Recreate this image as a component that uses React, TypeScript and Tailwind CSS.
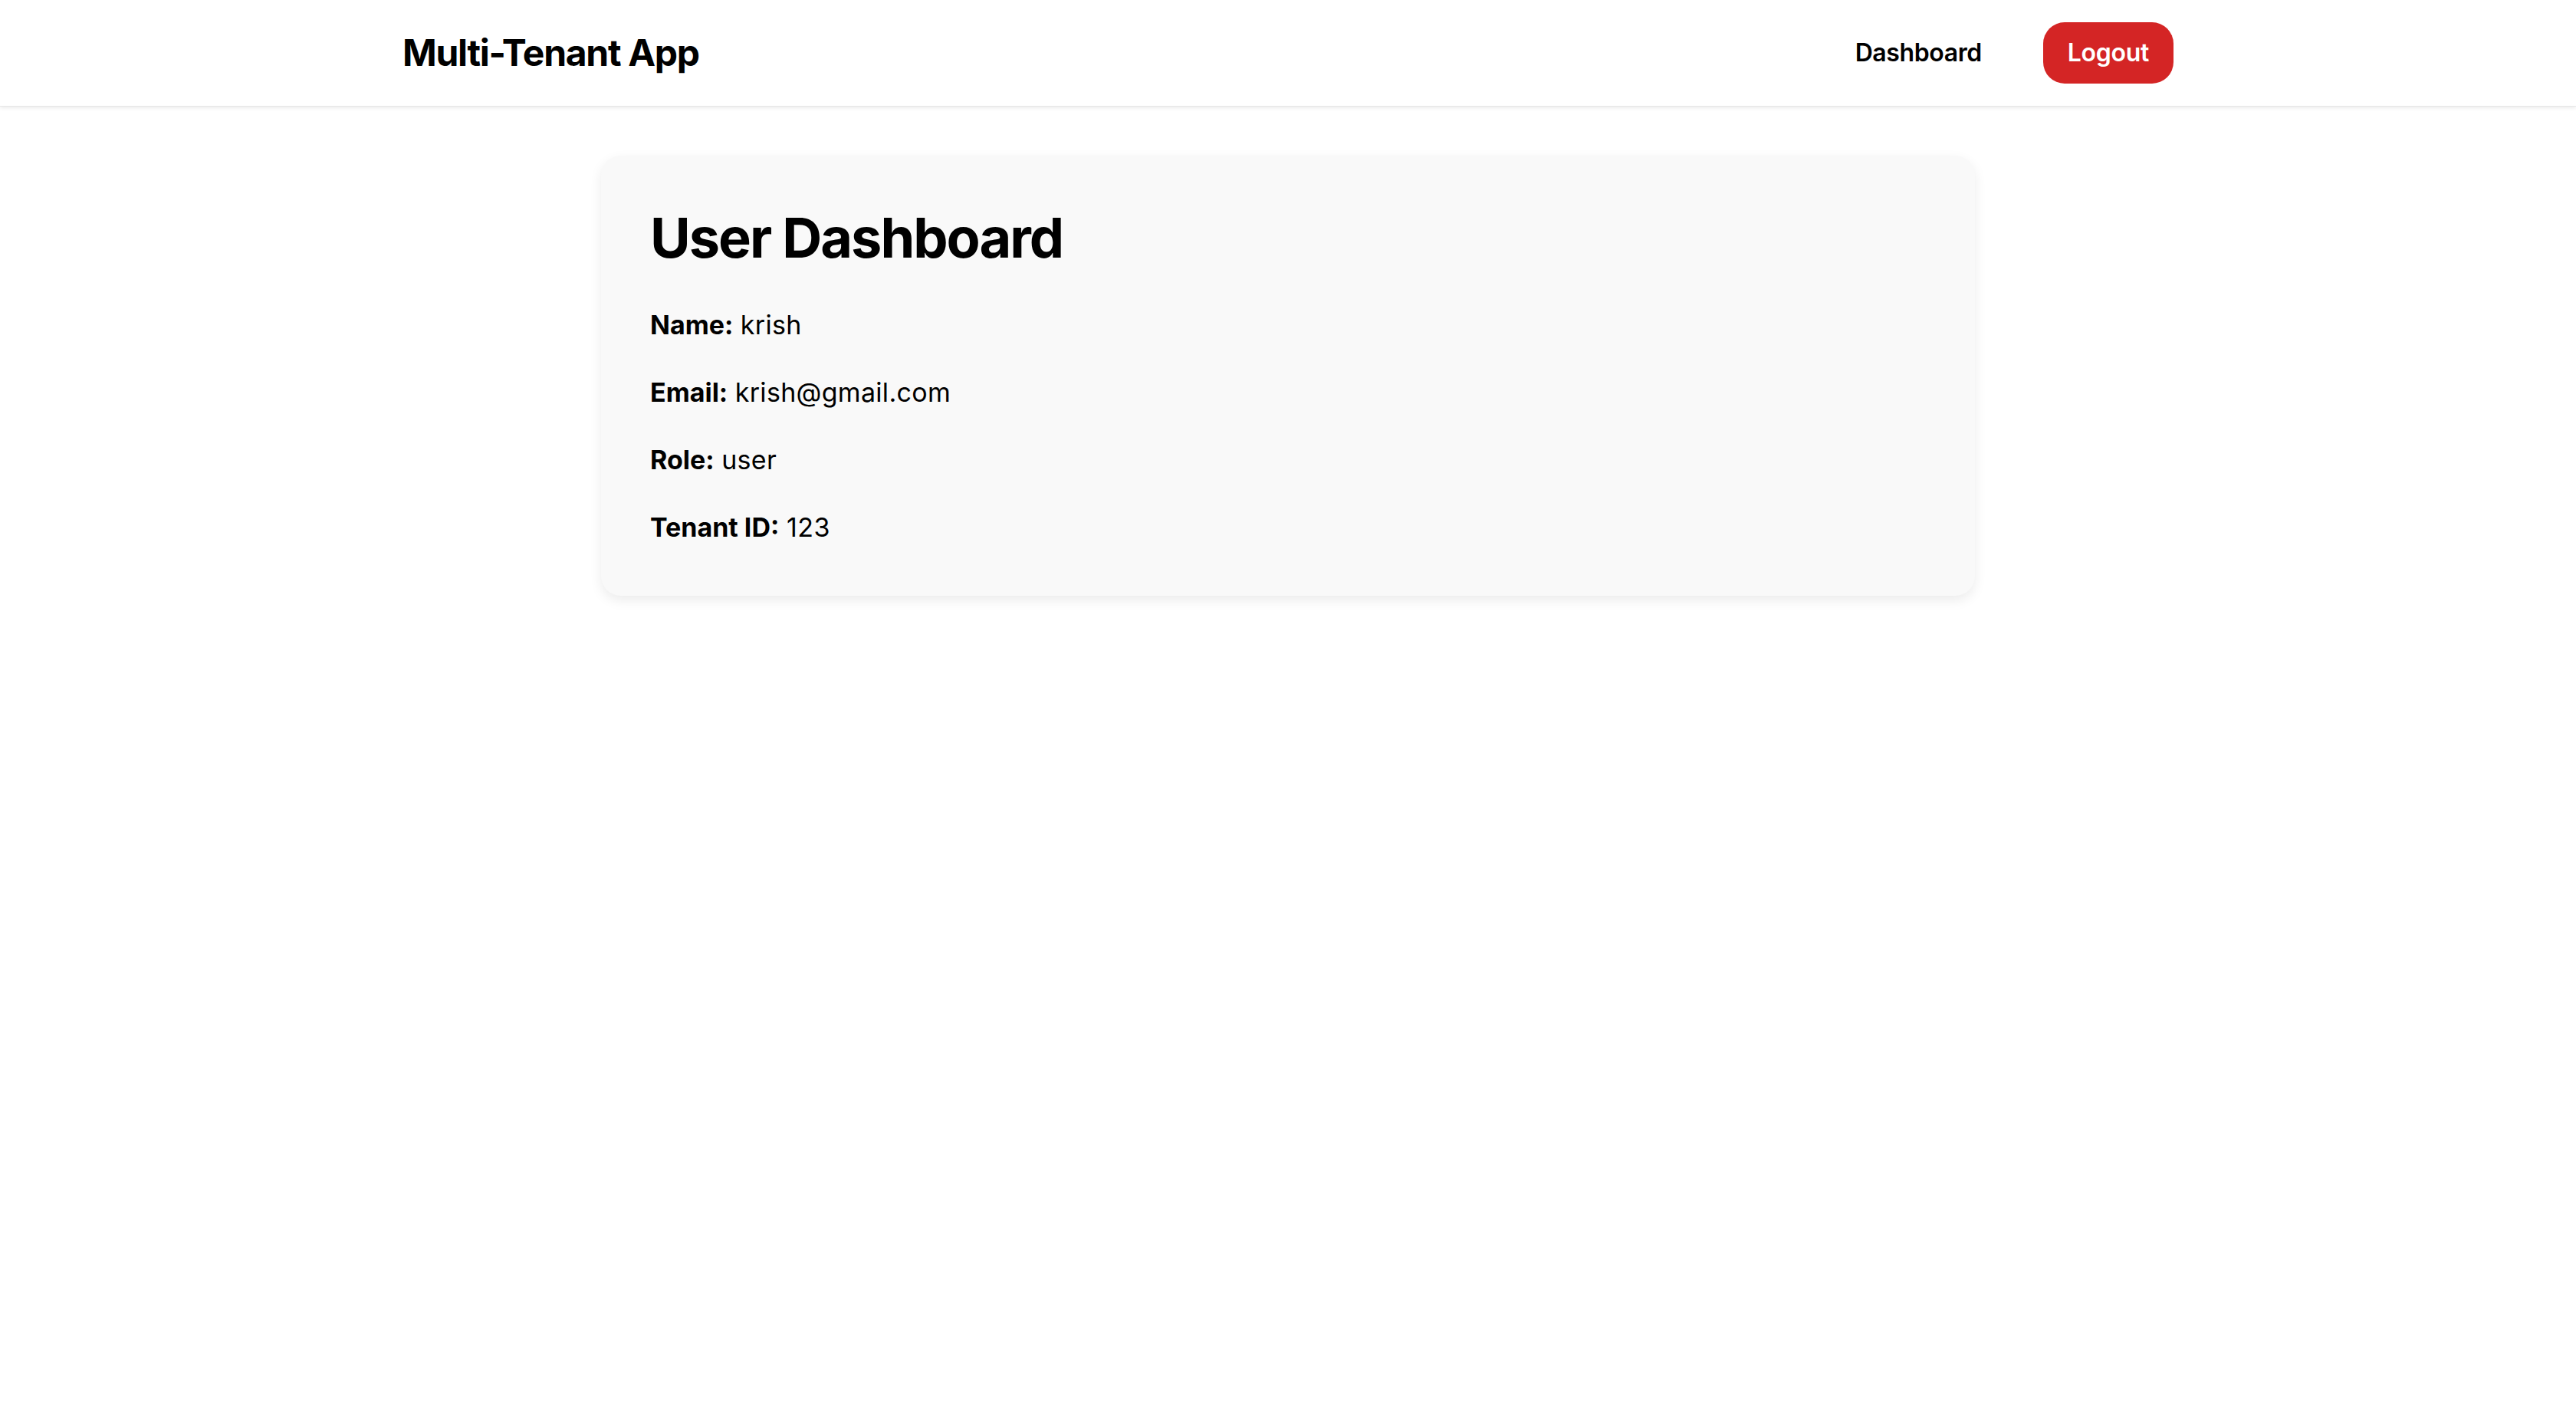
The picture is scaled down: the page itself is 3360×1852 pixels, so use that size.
export default function App() {
  const user = { name: "krish", email: "krish@gmail.com", role: "user", tenantId: "123" };

  return (
    <div className="min-h-screen bg-white text-black font-['Inter','Liberation_Sans',sans-serif]">
      <header className="h-[139px] bg-white shadow-[0_2px_5px_rgba(0,0,0,0.08)] border-b border-[#e6e6e6]">
        <div className="mx-auto flex h-full w-[2310px] items-center justify-between">
          <h1 className="text-[48px] font-bold tracking-[-1.3px]">Multi-Tenant App</h1>
          <nav className="flex items-center gap-[80px]">
            <a href="#" className="text-[32px] font-semibold tracking-[-0.4px]">
              Dashboard
            </a>
            <button className="h-[80px] rounded-[28px] bg-[#d42525] px-[32px] text-[32px] font-semibold tracking-[-0.3px] text-white">
              Logout
            </button>
          </nav>
        </div>
      </header>

      <main className="flex justify-center pt-[64px]">
        <section className="w-[1792px] rounded-[26px] bg-[#f9f9f9] p-16 shadow-[0_6px_16px_rgba(0,0,0,0.08)]">
          <h2 className="mb-[45px] text-[72px] font-bold leading-[1.2] tracking-[-2px]">User Dashboard</h2>
          <div className="flex flex-col gap-[37px] text-[34px] leading-[51px]">
            <p>
              <strong className="font-bold">Name:</strong> <span className="tracking-[0.3px]">{user.name}</span>
            </p>
            <p>
              <strong className="font-bold">Email:</strong> <span className="tracking-[0.3px]">{user.email}</span>
            </p>
            <p>
              <strong className="font-bold">Role:</strong> <span className="tracking-[0.3px]">{user.role}</span>
            </p>
            <p>
              <strong className="font-bold">Tenant ID:</strong> <span className="tracking-[0.5px]">{user.tenantId}</span>
            </p>
          </div>
        </section>
      </main>
    </div>
  );
}
